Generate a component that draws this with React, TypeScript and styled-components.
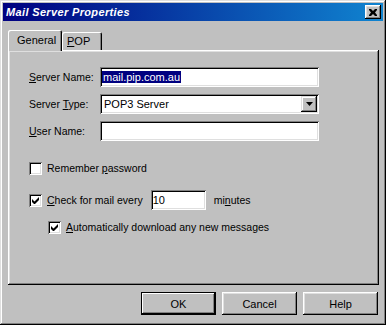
import styled, { createGlobalStyle } from 'styled-components';

// Global reset
const GlobalStyle = createGlobalStyle`
  html, body {
    margin: 0;
    padding: 0;
    background: #c0c0c0;
  }
  * {
    box-sizing: border-box;
  }
`;

const FONT = `"Liberation Sans", Arial, sans-serif`;

// Styled element (Window)
const StyledWindow = styled.div`
  width: 386px;
  height: 325px;
  background: #c0c0c0;
  padding: 3px;
  font-family: ${FONT};
  font-size: 10.5px;
  color: #000;
  display: flex;
  flex-direction: column;
  box-shadow: inset -1px -1px #000, inset 1px 1px #dfdfdf, inset -2px -2px #808080, inset 2px 2px #fff;
`;
// Styled element (TitleBar)
const StyledTitleBar = styled.div`
  height: 18px;
  display: flex;
  align-items: center;
  justify-content: space-between;
  padding: 0 2px 0 3px;
  background: linear-gradient(to right, #000080, #1084d0);
  color: #fff;
`;
const StyledTitleText = styled.span`
  font-weight: bold;
  font-style: italic;
  font-size: 11px;
  letter-spacing: 0.35px;
`;
const StyledCloseButton = styled.span`
  width: 16px;
  height: 14px;
  background: #c0c0c0;
  display: flex;
  align-items: center;
  justify-content: center;
  box-shadow: inset -1px -1px #000, inset 1px 1px #fff, inset -2px -2px #808080, inset 2px 2px #dfdfdf;
`;
// Styled element (Body)
const StyledBody = styled.div`
  flex: 1;
  display: flex;
  flex-direction: column;
  padding: 9px 4px 0 5px;
`;
// Styled element (TabStrip)
const StyledTabStrip = styled.div`
  display: flex;
  align-items: flex-end;
  height: 20px;
  position: relative;
  z-index: 1;
`;
const StyledTab = styled.div<{ $active?: boolean; $width: number }>`
  width: ${({ $width }) => $width}px;
  height: ${({ $active }) => ($active ? '21px' : '18px')};
  margin-bottom: ${({ $active }) => ($active ? '-1px' : '0')};
  padding: ${({ $active }) => ($active ? '3px 0 0 9px' : '2px 0 0 5px')};
  background: #c0c0c0;
  border-top-left-radius: 2px;
  border-top-right-radius: 2px;
  box-shadow: inset 1px 1px #fff, inset -1px 0 #000, inset -2px 0 #808080;
  line-height: 14px;
  font-size: 11px;
`;
// Styled element (Panel)
const StyledPanel = styled.div`
  height: 235px;
  padding: 17px 19px 0 21px;
  display: flex;
  flex-direction: column;
  box-shadow: inset -1px -1px #000, inset 1px 1px #fff, inset -2px -2px #808080, inset 2px 2px #dfdfdf;
`;
// Styled element (FieldGrid)
const StyledFieldGrid = styled.div`
  display: grid;
  grid-template-columns: 71px 219px;
  row-gap: 7px;
  align-items: center;
`;
const StyledLabel = styled.label`
  white-space: nowrap;
`;
const StyledKey = styled.span`
  text-decoration: underline;
  text-underline-offset: 1px;
`;
const StyledInput = styled.div<{ $width?: number }>`
  height: 20px;
  width: ${({ $width }) => ($width ? `${$width}px` : '100%')};
  background: #fff;
  display: flex;
  align-items: center;
  padding: 0 2px;
  font-size: 11px;
  box-shadow: inset 1px 1px #808080, inset -1px -1px #fff, inset 2px 2px #000, inset -2px -2px #dfdfdf;
  white-space: nowrap;
`;
const StyledSelection = styled.span`
  background: #000080;
  color: #fff;
  padding: 0 1px;
`;
const StyledSelectText = styled.span`
  flex: 1;
  padding-left: 2px;
`;
const StyledDropButton = styled.span`
  width: 16px;
  height: 16px;
  background: #c0c0c0;
  display: flex;
  align-items: center;
  justify-content: center;
  box-shadow: inset -1px -1px #000, inset 1px 1px #dfdfdf, inset -2px -2px #808080, inset 2px 2px #fff;
`;
// Styled element (Options)
const StyledOptions = styled.div`
  display: flex;
  flex-direction: column;
  margin-top: 18px;
`;
const StyledCheckRow = styled.div<{ $indent?: number; $gap?: number }>`
  display: flex;
  align-items: center;
  height: 18px;
  margin-left: ${({ $indent }) => $indent ?? 0}px;
  margin-top: ${({ $gap }) => $gap ?? 0}px;
  white-space: nowrap;
`;
const StyledCheckbox = styled.span`
  width: 13px;
  height: 13px;
  background: #fff;
  margin-right: 5px;
  flex: none;
  display: flex;
  align-items: center;
  justify-content: center;
  box-shadow: inset 1px 1px #808080, inset -1px -1px #fff, inset 2px 2px #000, inset -2px -2px #dfdfdf;
`;
const StyledInline = styled.span<{ $before?: number; $after?: number }>`
  margin-left: ${({ $before }) => $before ?? 0}px;
  margin-right: ${({ $after }) => $after ?? 0}px;
`;
// Styled element (ButtonRow)
const StyledButtonRow = styled.div`
  display: flex;
  justify-content: flex-end;
  gap: 6px;
  padding: 7px 1px 0 0;
`;
const StyledButton = styled.button<{ $default?: boolean }>`
  width: 75px;
  height: 23px;
  border: none;
  background: #c0c0c0;
  font-family: ${FONT};
  font-size: 11px;
  color: #000;
  padding: 0;
  box-shadow: ${({ $default }) =>
    $default
      ? 'inset -1px -1px #000, inset 1px 1px #000, inset -2px -2px #000, inset 2px 2px #fff, inset -3px -3px #808080'
      : 'inset -1px -1px #000, inset 1px 1px #fff, inset -2px -2px #808080, inset 2px 2px #dfdfdf'};
`;

// Icon (close)
const CloseIcon = (): JSX.Element => (
  <svg width='8' height='7' viewBox='0 0 8 7'>
    <path d='M0 0h2l2 2 2-2h2v1L6 3.5 8 6v1H6L4 5 2 7H0V6l2-2.5L0 1z' fill='#000' />
  </svg>
);
// Icon (dropdown arrow)
const ArrowIcon = (): JSX.Element => (
  <svg width='7' height='4' viewBox='0 0 7 4'>
    <path d='M0 0h7L3.5 4z' fill='#000' />
  </svg>
);
// Icon (check)
const CheckIcon = (): JSX.Element => (
  <svg width='7' height='7' viewBox='0 0 7 7'>
    <path d='M0 2v3l2 2h1l4-4V0L2.5 4.5z' fill='#000' />
  </svg>
);

// Component (checkbox)
const Checkbox = ({ checked }: { checked?: boolean }): JSX.Element => (
  <StyledCheckbox>{checked ? <CheckIcon /> : null}</StyledCheckbox>
);

export default function App(): JSX.Element {
  return (
    <>
      <GlobalStyle />
      <StyledWindow>
        <StyledTitleBar>
          <StyledTitleText>Mail Server Properties</StyledTitleText>
          <StyledCloseButton><CloseIcon /></StyledCloseButton>
        </StyledTitleBar>
        <StyledBody>
          <StyledTabStrip>
            <StyledTab $active $width={54}>General</StyledTab>
            <StyledTab $width={40}><StyledKey>P</StyledKey>OP</StyledTab>
          </StyledTabStrip>
          <StyledPanel>
            <StyledFieldGrid>
              <StyledLabel><StyledKey>S</StyledKey>erver Name:</StyledLabel>
              <StyledInput><StyledSelection>mail.pip.com.au</StyledSelection></StyledInput>
              <StyledLabel>Server <StyledKey>T</StyledKey>ype:</StyledLabel>
              <StyledInput>
                <StyledSelectText>POP3 Server</StyledSelectText>
                <StyledDropButton><ArrowIcon /></StyledDropButton>
              </StyledInput>
              <StyledLabel><StyledKey>U</StyledKey>ser Name:</StyledLabel>
              <StyledInput />
            </StyledFieldGrid>
            <StyledOptions>
              <StyledCheckRow>
                <Checkbox />
                <span>Remember <StyledKey>p</StyledKey>assword</span>
              </StyledCheckRow>
              <StyledCheckRow $gap={14}>
                <Checkbox checked />
                <StyledInline $after={8}><StyledKey>C</StyledKey>heck for mail every</StyledInline>
                <StyledInput $width={55}>10</StyledInput>
                <StyledInline $before={8}>mi<StyledKey>n</StyledKey>utes</StyledInline>
              </StyledCheckRow>
              <StyledCheckRow $indent={19} $gap={9}>
                <Checkbox checked />
                <span><StyledKey>A</StyledKey>utomatically download any new messages</span>
              </StyledCheckRow>
            </StyledOptions>
          </StyledPanel>
          <StyledButtonRow>
            <StyledButton $default>OK</StyledButton>
            <StyledButton>Cancel</StyledButton>
            <StyledButton>Help</StyledButton>
          </StyledButtonRow>
        </StyledBody>
      </StyledWindow>
    </>
  );
}
